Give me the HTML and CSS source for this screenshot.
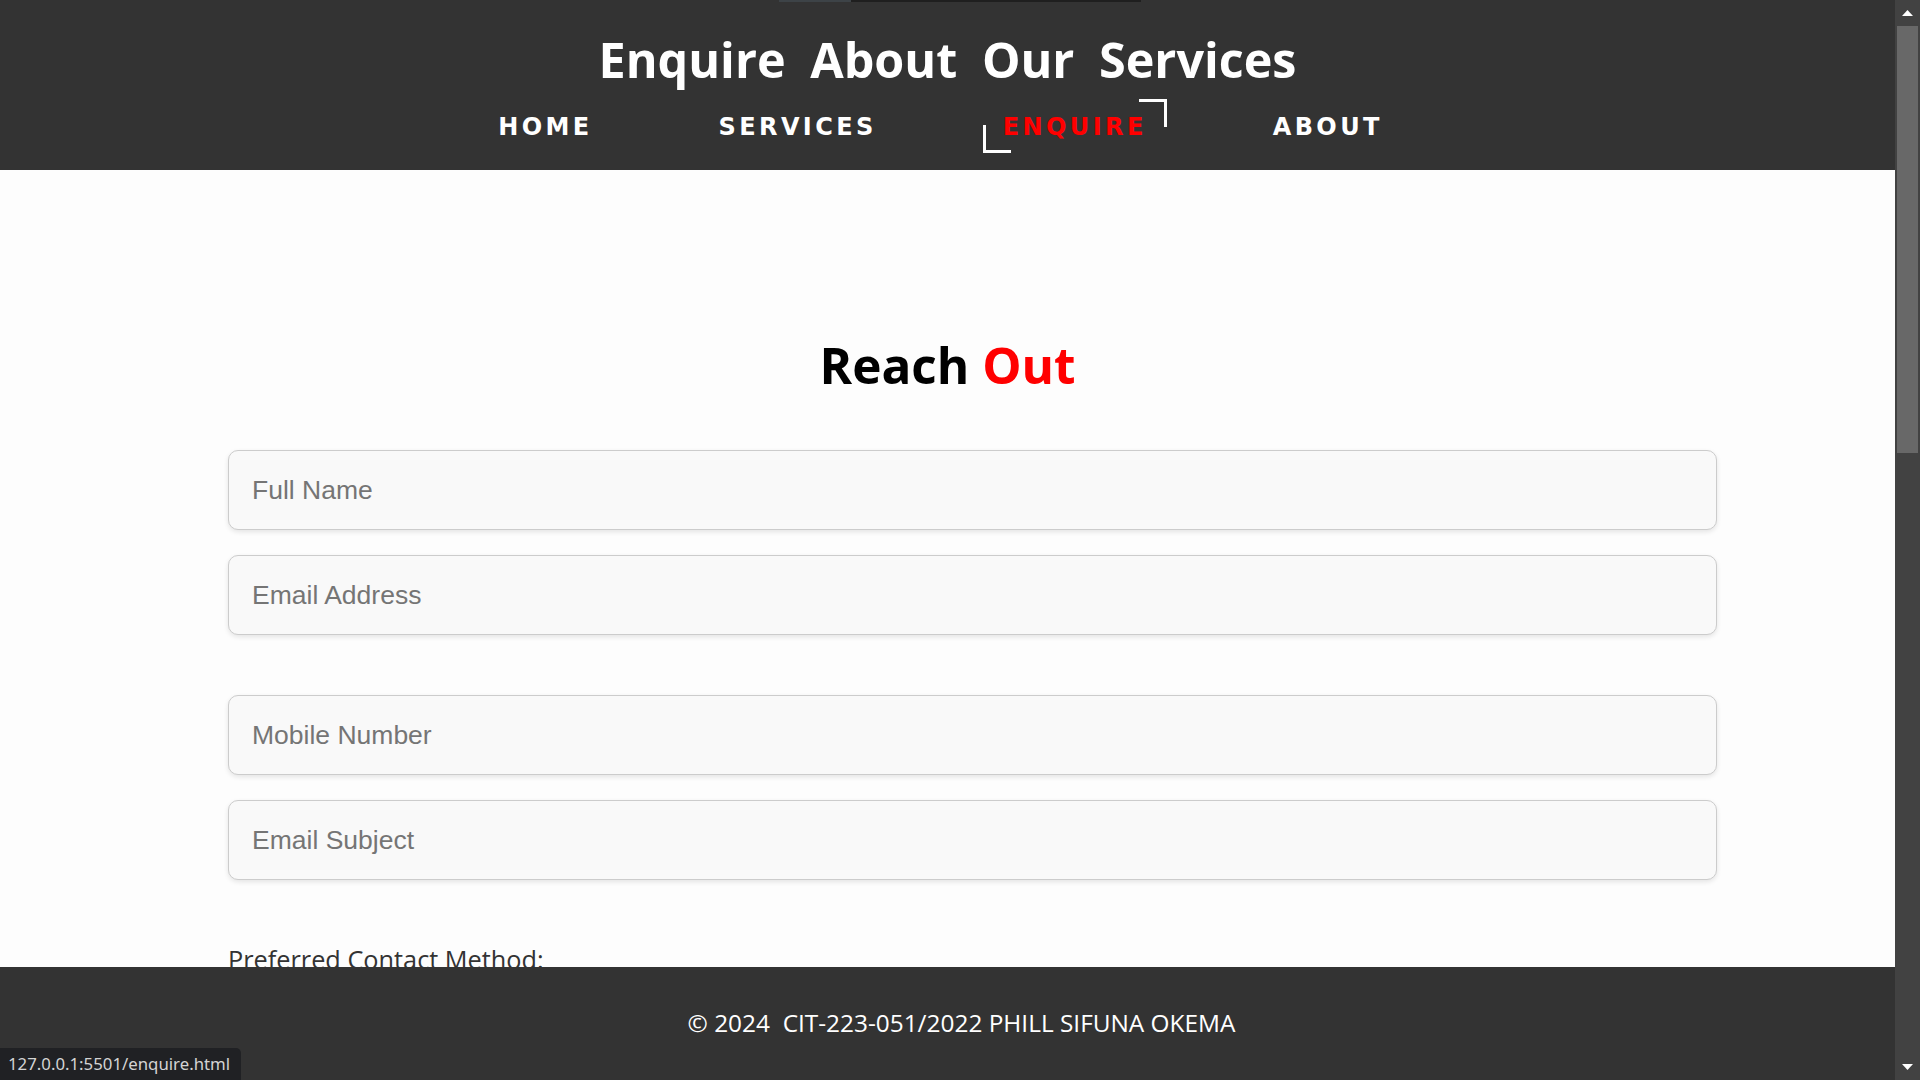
FILE: index.html
```html
<!DOCTYPE html>
<html lang="en">
<head>
<meta charset="utf-8">
<title>Enquire</title>
<link rel="stylesheet" href="styles.css">
</head>
<body>
<div class="window">
  <div class="page">
    <header class="site-header">
      <h1 class="site-title">Enquire About Our Services</h1>
      <nav class="main-nav">
        <a href="#" class="nav-link">HOME</a>
        <a href="#" class="nav-link">SERVICES</a>
        <a href="#" class="nav-link active">ENQUIRE</a>
        <a href="#" class="nav-link">ABOUT</a>
      </nav>
    </header>
    <main class="content">
      <h2 class="section-title">Reach <span class="accent">Out</span></h2>
      <form class="enquiry-form">
        <input class="field" type="text" placeholder="Full Name">
        <input class="field" type="email" placeholder="Email Address">
        <input class="field spaced" type="tel" placeholder="Mobile Number">
        <input class="field" type="text" placeholder="Email Subject">
        <p class="form-label">Preferred Contact Method:</p>
      </form>
    </main>
    <footer class="site-footer">
      <p class="footer-text">©&nbsp;2024&nbsp; CIT-223-051/2022 PHILL SIFUNA OKEMA</p>
    </footer>
  </div>
  <div class="scrollbar">
    <div class="sb-btn">
      <svg width="11" height="6" viewBox="0 0 11 6"><polygon points="0,6 11,6 5.5,0" fill="#ffffff"/></svg>
    </div>
    <div class="sb-track"><div class="sb-thumb"></div></div>
    <div class="sb-btn">
      <svg width="11" height="6" viewBox="0 0 11 6"><polygon points="0,0 11,0 5.5,6" fill="#ffffff"/></svg>
    </div>
  </div>
</div>
<div class="top-strip"><span class="strip-a"></span><span class="strip-b"></span></div>
<div class="status-bubble">127.0.0.1:5501/enquire.html</div>
</body>
</html>
```

FILE: styles.css
```css
* { box-sizing: border-box; }

html, body {
  margin: 0;
  padding: 0;
  height: 100%;
  overflow: hidden;
}

body {
  background: #333333;
  font-family: "Open Sans", "Liberation Sans", sans-serif;
}

.window {
  display: flex;
  height: 100vh;
}

.page {
  flex: 1;
  display: flex;
  flex-direction: column;
  min-width: 0;
}

.site-header {
  background: #333333;
  height: 170px;
  padding-top: 29px;
  text-align: center;
}

.site-title {
  margin: 0;
  font-family: "Open Sans", sans-serif;
  font-weight: 700;
  font-size: 48.5px;
  line-height: 60px;
  word-spacing: 12px;
  color: #ffffff;
}

.main-nav {
  margin-top: 11px;
  display: flex;
  justify-content: center;
  gap: 86px;
  padding-right: 14px;
}

.nav-link {
  position: relative;
  display: block;
  padding: 13px 20px 12px 20px;
  font-family: "DejaVu Sans", Verdana, sans-serif;
  font-weight: 700;
  font-size: 24px;
  line-height: 28px;
  letter-spacing: 3.4px;
  color: #ffffff;
  text-decoration: none;
}

.nav-link.active {
  color: #ff0000;
}

.nav-link.active::before,
.nav-link.active::after {
  content: "";
  position: absolute;
  width: 25px;
  height: 25px;
}

.nav-link.active::before {
  top: -1px;
  right: 0;
  border-top: 3px solid #ffffff;
  border-right: 3px solid #ffffff;
}

.nav-link.active::after {
  bottom: 0;
  left: 0;
  border-bottom: 3px solid #ffffff;
  border-left: 3px solid #ffffff;
}

.content {
  flex: 1;
  min-height: 0;
  overflow: hidden;
  background: #fdfdfd;
  padding-top: 165px;
}

.section-title {
  margin: 0;
  text-align: center;
  font-family: "Open Sans", sans-serif;
  font-weight: 700;
  font-size: 49.5px;
  line-height: 60px;
  color: #000000;
}

.accent { color: #ff0000; }

.enquiry-form {
  margin: 55px 0 0 228px;
  width: 1489px;
  display: flex;
  flex-direction: column;
  gap: 25px;
}

.field {
  display: block;
  width: 100%;
  height: 80px;
  padding: 0 23px;
  background: #f9f9f9;
  border: 1px solid #cccccc;
  border-radius: 10px;
  box-shadow: 0 2px 5px rgba(0, 0, 0, 0.1);
  font-family: "Liberation Sans", Arial, sans-serif;
  font-size: 26.5px;
  color: #333333;
  outline: none;
}

.field::placeholder { color: #757575; }

.field.spaced { margin-top: 35px; }

.form-label {
  margin: 36px 0 0 0;
  font-family: "Open Sans", sans-serif;
  font-size: 25.3px;
  line-height: 36px;
  color: #333333;
}

.site-footer {
  height: 113px;
  background: #333333;
  padding-top: 39px;
  padding-left: 28px;
  text-align: center;
}

.footer-text {
  margin: 0;
  font-family: "Open Sans", sans-serif;
  font-size: 24.4px;
  line-height: 34px;
  color: #ffffff;
}

.scrollbar {
  width: 25px;
  background: #424242;
  display: flex;
  flex-direction: column;
}

.sb-btn {
  height: 26px;
  display: flex;
  align-items: center;
  justify-content: center;
}

.sb-track {
  flex: 1;
  padding: 0 2px;
}

.sb-thumb {
  height: 427px;
  background: #686868;
}

.top-strip {
  position: absolute;
  top: 0;
  left: 779px;
  display: flex;
  height: 2px;
}

.strip-a { width: 72px; background: #3d4347; }
.strip-b { width: 290px; background: #1f1f1f; }

.status-bubble {
  position: absolute;
  left: 0;
  bottom: 0;
  height: 32px;
  padding: 0 11px 0 8px;
  background: #202124;
  border-top-right-radius: 5px;
  font-family: "Noto Sans", "Open Sans", sans-serif;
  font-size: 16.8px;
  line-height: 32px;
  color: #d4d4d4;
}
```
